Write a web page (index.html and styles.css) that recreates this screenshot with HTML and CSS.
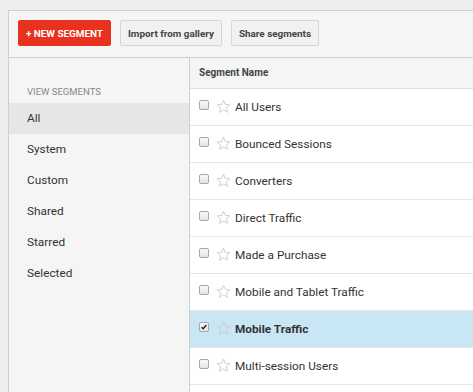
FILE: index.html
```html
<!DOCTYPE html>
<html>
<head>
<meta charset="utf-8">
<link rel="stylesheet" href="styles.css">
</head>
<body>
<div class="panel">
  <div class="toolbar">
    <button class="btn btn-red">+ NEW SEGMENT</button>
    <button class="btn">Import from gallery</button>
    <button class="btn">Share segments</button>
  </div>
  <div class="main">
    <div class="sidebar">
      <div class="side-title">VIEW SEGMENTS</div>
      <div class="side-item active">All</div>
      <div class="side-item">System</div>
      <div class="side-item">Custom</div>
      <div class="side-item">Shared</div>
      <div class="side-item">Starred</div>
      <div class="side-item">Selected</div>
    </div>
    <div class="table">
      <div class="thead">Segment Name</div>
      <div class="row"><span class="cb"></span><svg class="star" viewBox="0 0 16 16"><path d="M8 1.2l1.9 4.6 4.9.4-3.7 3.2 1.1 4.8L8 11.6l-4.2 2.6 1.1-4.8L1.2 6.2l4.9-.4z"/></svg><span class="name">All Users</span></div>
      <div class="row"><span class="cb"></span><svg class="star" viewBox="0 0 16 16"><path d="M8 1.2l1.9 4.6 4.9.4-3.7 3.2 1.1 4.8L8 11.6l-4.2 2.6 1.1-4.8L1.2 6.2l4.9-.4z"/></svg><span class="name">Bounced Sessions</span></div>
      <div class="row"><span class="cb"></span><svg class="star" viewBox="0 0 16 16"><path d="M8 1.2l1.9 4.6 4.9.4-3.7 3.2 1.1 4.8L8 11.6l-4.2 2.6 1.1-4.8L1.2 6.2l4.9-.4z"/></svg><span class="name">Converters</span></div>
      <div class="row"><span class="cb"></span><svg class="star" viewBox="0 0 16 16"><path d="M8 1.2l1.9 4.6 4.9.4-3.7 3.2 1.1 4.8L8 11.6l-4.2 2.6 1.1-4.8L1.2 6.2l4.9-.4z"/></svg><span class="name">Direct Traffic</span></div>
      <div class="row"><span class="cb"></span><svg class="star" viewBox="0 0 16 16"><path d="M8 1.2l1.9 4.6 4.9.4-3.7 3.2 1.1 4.8L8 11.6l-4.2 2.6 1.1-4.8L1.2 6.2l4.9-.4z"/></svg><span class="name">Made a Purchase</span></div>
      <div class="row"><span class="cb"></span><svg class="star" viewBox="0 0 16 16"><path d="M8 1.2l1.9 4.6 4.9.4-3.7 3.2 1.1 4.8L8 11.6l-4.2 2.6 1.1-4.8L1.2 6.2l4.9-.4z"/></svg><span class="name">Mobile and Tablet Traffic</span></div>
      <div class="row selected"><span class="cb checked"><svg viewBox="0 0 10 10"><path d="M2 5.2l2 2 4-4.6"/></svg></span><svg class="star" viewBox="0 0 16 16"><path d="M8 1.2l1.9 4.6 4.9.4-3.7 3.2 1.1 4.8L8 11.6l-4.2 2.6 1.1-4.8L1.2 6.2l4.9-.4z"/></svg><span class="name">Mobile Traffic</span></div>
      <div class="row"><span class="cb"></span><svg class="star" viewBox="0 0 16 16"><path d="M8 1.2l1.9 4.6 4.9.4-3.7 3.2 1.1 4.8L8 11.6l-4.2 2.6 1.1-4.8L1.2 6.2l4.9-.4z"/></svg><span class="name">Multi-session Users</span></div>
    </div>
  </div>
</div>
</body>
</html>
```
FILE: styles.css
```css
html, body {
  margin: 0;
  padding: 0;
  height: 100%;
  overflow: hidden;
}
body {
  background: #eeeeee;
  font-family: Roboto, "Liberation Sans", Arial, sans-serif;
  color: #333;
  padding: 10px 0 0 8px;
  box-sizing: border-box;
}
.panel {
  background: #f5f5f5;
  border-left: 1px solid #cfcfcf;
  border-top: 1px solid #cfcfcf;
  height: 100%;
  display: flex;
  flex-direction: column;
}
.toolbar {
  height: 47px;
  box-sizing: border-box;
  padding: 9px 9px 0 9px;
  border-bottom: 1px solid #cfcfcf;
  display: flex;
  gap: 9px;
  align-items: flex-start;
}
.btn {
  height: 26px;
  padding: 0 7px;
  font-family: Roboto, "Liberation Sans", Arial, sans-serif;
  font-size: 9.9px;
  font-weight: 700;
  color: #444;
  background: #f1f1f1;
  border: 1px solid #d6d6d6;
  border-radius: 2px;
  white-space: nowrap;
  cursor: pointer;
}
.btn-red {
  background: #e8321f;
  border-color: #e8321f;
  color: #fff;
}
.main {
  flex: 1;
  display: flex;
  min-height: 0;
}
.sidebar {
  width: 180px;
  border-right: 1px solid #cfcfcf;
  background: #f5f5f5;
  padding-top: 25px;
  flex-shrink: 0;
}
.side-title {
  font-size: 9.5px;
  color: #888;
  padding-left: 18px;
  height: 20px;
  line-height: 18px;
}
.side-item {
  height: 31px;
  line-height: 31px;
  padding-left: 18px;
  font-size: 11.8px;
  color: #333;
}
.side-item.active {
  background: #e6e6e6;
}
.table {
  flex: 1;
  background: #fff;
  min-width: 0;
}
.thead {
  height: 30px;
  line-height: 30px;
  background: #f5f5f5;
  border-bottom: 1px solid #e0e0e0;
  font-size: 10px;
  font-weight: 700;
  color: #444;
  padding-left: 9px;
}
.row {
  height: 36px;
  border-bottom: 1px solid #e5e5e5;
  display: flex;
  align-items: center;
  padding-left: 9px;
  font-size: 11.8px;
  color: #333;
}
.row.selected {
  background: #c8e6f4;
}
.row.selected .name {
  font-weight: 700;
}
.cb {
  width: 8px;
  height: 8px;
  border: 1px solid #a8a8a8;
  border-radius: 2px;
  background: linear-gradient(#fafafa, #e4e4e4);
  margin-top: -5px;
  display: inline-flex;
  align-items: center;
  justify-content: center;
}
.cb svg {
  width: 8px;
  height: 8px;
  fill: none;
  stroke: #222;
  stroke-width: 1.8;
}
.star {
  width: 15px;
  height: 15px;
  margin-left: 7px;
  margin-top: -2px;
  fill: none;
  stroke: #cccccc;
  stroke-width: 1;
}
.name {
  margin-left: 4px;
}
```
